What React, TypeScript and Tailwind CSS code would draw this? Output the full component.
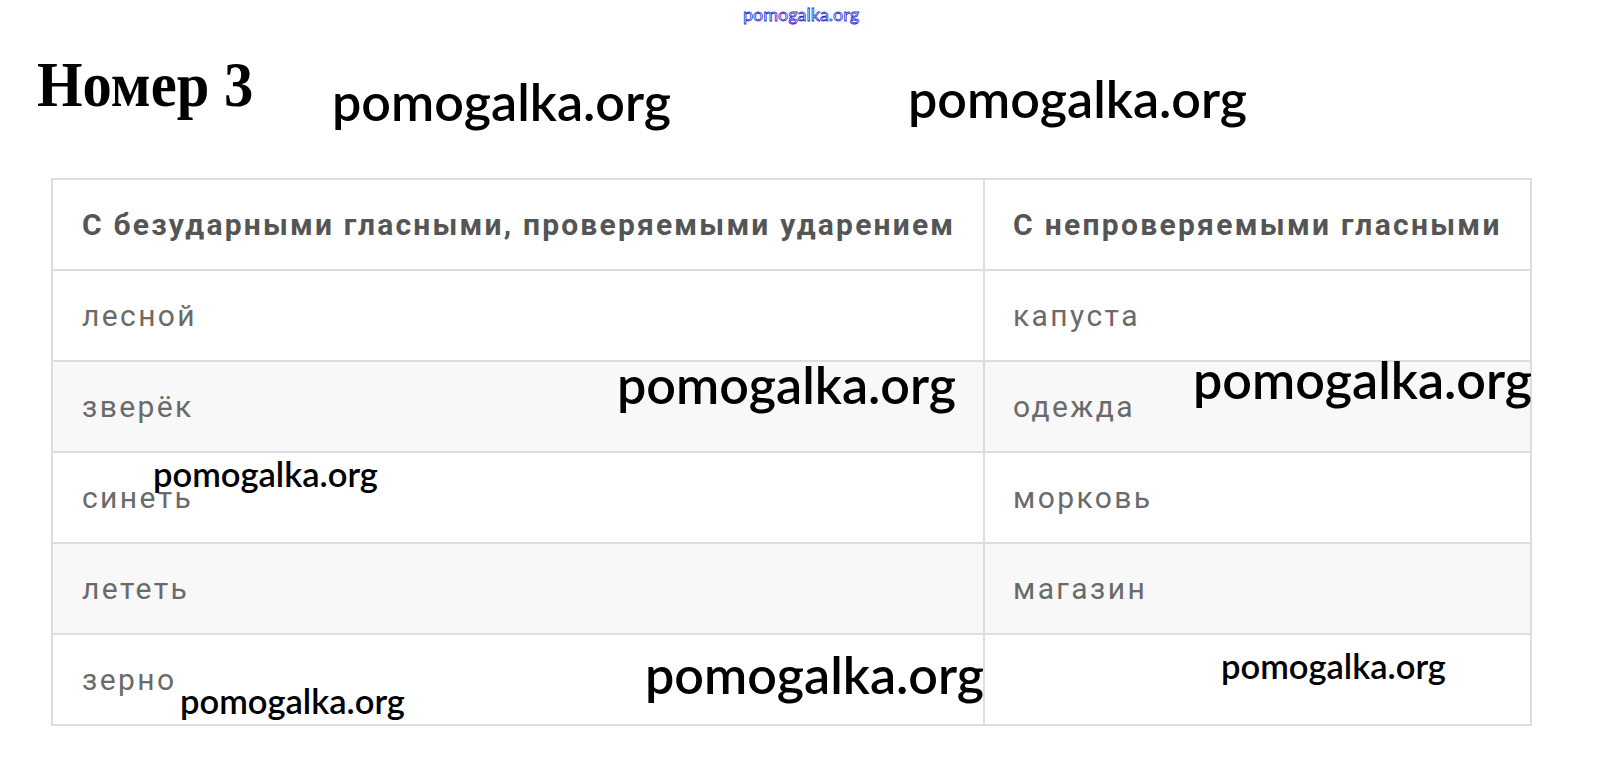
const rows: [string, string][] = [
  ['лесной', 'капуста'],
  ['зверёк', 'одежда'],
  ['синеть', 'морковь'],
  ['лететь', 'магазин'],
  ['зерно', ''],
];

const marks: { className: string }[] = [
  { className: 'left-[332px] top-[75px] text-[52px]' },
  { className: 'left-[908px] top-[72px] text-[52px]' },
  { className: 'left-[617px] top-[358px] text-[52px]' },
  { className: 'left-[1193px] top-[353px] text-[52px]' },
  { className: 'left-[645px] top-[648px] text-[52px]' },
  { className: 'left-[153px] top-[457px] text-[34.5px]' },
  { className: 'left-[180px] top-[684px] text-[34.5px]' },
  { className: 'left-[1221px] top-[649px] text-[34.5px]' },
];

export default function App() {
  return (
    <div className="relative w-[1599px] h-[769px] overflow-hidden bg-white">
      {/* top site mark */}
      <div className="flex justify-center pl-[3px] pt-[1px] h-[24px]">
        <span className="font-['Lato',sans-serif] text-[18px] text-white [-webkit-text-stroke:0.8px_#2a2ad0]">
          pomogalka.org
        </span>
      </div>

      <div className="px-[51px]">
        <h1 className="-ml-[14px] mt-[30px] h-[124px] origin-left scale-x-[0.93] font-['Liberation_Serif',serif] font-bold text-[63px] leading-none text-black">
          Номер 3
        </h1>

        <table className="w-[1481px] border-collapse font-['Roboto',sans-serif] text-[#6a6a6a]">
          <thead>
            <tr className="h-[91px]">
              <th className="w-[932px] border-2 border-[#ddd] pl-[29px] text-left text-[30px] font-bold text-[#555] tracking-[2.2px]">
                С безударными гласными, проверяемыми ударением
              </th>
              <th className="border-2 border-[#ddd] pl-[28px] text-left text-[30px] font-bold text-[#555] tracking-[2.3px]">
                С непроверяемыми гласными
              </th>
            </tr>
          </thead>
          <tbody>
            {rows.map(([a, b], i) => (
              <tr key={i} className={i % 2 === 1 ? 'h-[91px] bg-[#f8f8f8]' : 'h-[91px] bg-white'}>
                <td className="border-2 border-[#ddd] pl-[29px] text-[30px] tracking-[2.4px]">{a}</td>
                <td className="border-2 border-[#ddd] pl-[28px] text-[30px] tracking-[2.4px]">{b}</td>
              </tr>
            ))}
          </tbody>
        </table>
      </div>

      {/* watermarks over the content */}
      {marks.map((m, i) => (
        <span
          key={i}
          className={`absolute font-['Lato',sans-serif] font-semibold leading-none text-black ${m.className}`}
        >
          pomogalka.org
        </span>
      ))}
    </div>
  );
}
